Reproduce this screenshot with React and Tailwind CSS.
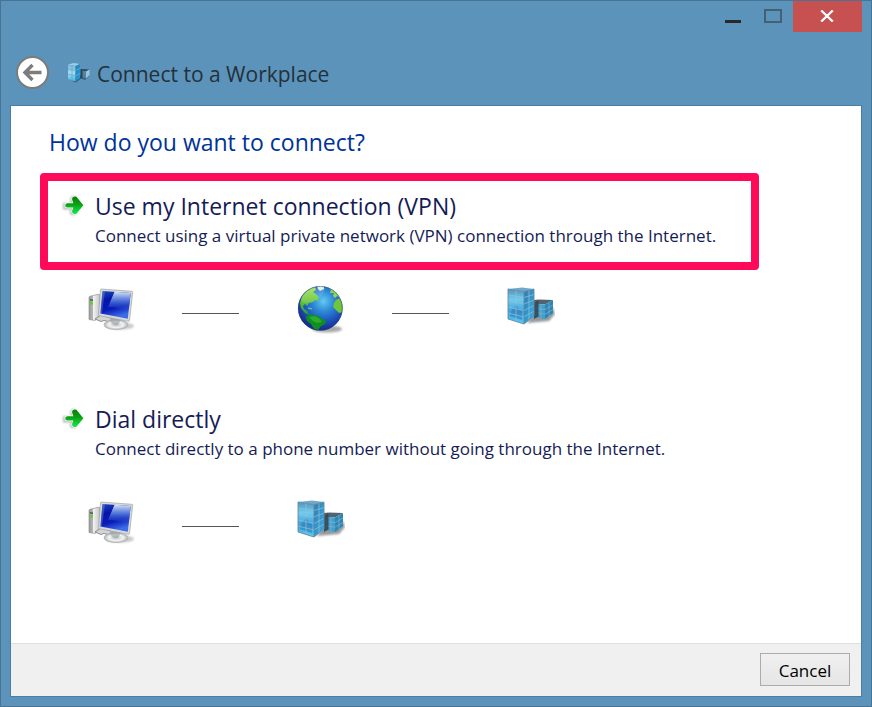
import React from 'react';

// Front, side and roof of the two glass towers
function BuildingsIcon({ className }) {
  return (
    <svg viewBox="0 0 48 48" className={className} aria-hidden="true">
      <defs>
        <linearGradient id="towerFront" x1="0" y1="0" x2="0" y2="1">
          <stop offset="0" stopColor="#4f93c2" />
          <stop offset="0.3" stopColor="#6ecbf0" />
          <stop offset="0.65" stopColor="#3ba3df" />
          <stop offset="1" stopColor="#5ccbf5" />
        </linearGradient>
        <linearGradient id="towerSide" x1="0" y1="0" x2="1" y2="1">
          <stop offset="0" stopColor="#2f7db0" />
          <stop offset="1" stopColor="#31b0ee" />
        </linearGradient>
        <filter id="towerShadow" x="-20%" y="-20%" width="140%" height="140%">
          <feGaussianBlur stdDeviation="1.2" />
        </filter>
      </defs>
      <path d="M20 37 L42 35 L48 28 L46 22 L30 22Z" fill="#3d4650" opacity="0.55" filter="url(#towerShadow)" />
      {/* low building */}
      <path d="M27 17.5 L32 13.5 L46 14 L38 18.5Z" fill="#4f6470" />
      <path d="M27 17.5 L38 18.5 V33 L27 30.5Z" fill="#3f9fce" />
      <path d="M38 18.5 L46 14 V27 L38 33Z" fill="#2b86b8" />
      <path d="M34 18 V32 M42 16.5 V30 M27 22 L38 23.6 L46 19 M27 26.3 L38 28.2 L46 23.5" stroke="#93b6c6" strokeWidth="0.6" fill="none" />
      <path d="M27 14 L31.5 13.5 V30.5 L27 33Z" fill="#36424b" opacity="0.85" />
      {/* tall building */}
      <path d="M1 3 L15 1.5 L27 3 L17 5.5Z" fill="#71a9cd" />
      <path d="M1 3 L17 5.5 V38 L1 33Z" fill="url(#towerFront)" />
      <path d="M17 5.5 L27 3 V30 L17 38Z" fill="url(#towerSide)" />
      <path d="M3 30 L5 23 L8 21 L9 18 L11 22 L15 25 V34Z" fill="#2c78b5" opacity="0.55" />
      <path d="M9 4 V35.5 M22 4.5 V34" stroke="#9cc0cf" strokeWidth="0.7" />
      <path d="M1 9 L17 11.5 L27 8.5 M1 15 L17 18 L27 14 M1 21 L17 24.5 L27 19.5 M1 27 L17 31 L27 25" stroke="#9cc0cf" strokeWidth="0.7" fill="none" />
      <path d="M1 3 V33 L17 38 L27 30 V3 M1 3 L17 5.5 L27 3 M17 5.5 V38" stroke="#6d8997" strokeWidth="0.9" fill="none" />
    </svg>
  );
}

// Simplified towers, used at caption size
function SmallBuildingsIcon({ className }) {
  return (
    <svg viewBox="0 0 24 24" className={className} aria-hidden="true">
      <defs>
        <linearGradient id="smallFront" x1="0" y1="0" x2="0" y2="1">
          <stop offset="0" stopColor="#6eb6da" />
          <stop offset="0.5" stopColor="#a6dcf0" />
          <stop offset="1" stopColor="#45b4e2" />
        </linearGradient>
        <linearGradient id="smallSide" x1="0" y1="0" x2="1" y2="1">
          <stop offset="0" stopColor="#2c7fae" />
          <stop offset="1" stopColor="#1fa0dd" />
        </linearGradient>
      </defs>
      <path d="M5 20 L9 21.5 L14 17.5 L18 19 L22 15 V13 L14 14Z" fill="#23394a" opacity="0.6" />
      <path d="M14.5 9.5 L16 8 L22.5 8.5 L19.5 10.5Z" fill="#354b5b" />
      <path d="M14.5 9.5 L19 10.5 V17.5 L14.5 16Z" fill="#4a86aa" />
      <path d="M19 10.5 L22.5 8.5 V14 L19 17.5Z" fill="#9bc6da" />
      <path d="M13.5 8 H15.5 V16.5 L13.5 18Z" fill="#2b4253" />
      <path d="M1 3.5 L7 2 L13 3 L8.5 5Z" fill="#a6cbdc" />
      <path d="M1 3.5 L8.5 5 V20.5 L1 18Z" fill="url(#smallFront)" />
      <path d="M8.5 5 L13 3 V17 L8.5 20.5Z" fill="url(#smallSide)" />
      <path d="M5 4.5 V19 M1 8 L8.5 9.5 M1 13 L8.5 15" stroke="#4d96bd" strokeWidth="0.5" />
      <path d="M8.5 9.5 L13 7.5 M8.5 15 L13 12.5" stroke="#7cc6e6" strokeWidth="0.5" />
    </svg>
  );
}

function ComputerIcon({ className }) {
  return (
    <svg viewBox="0 0 48 48" className={className} aria-hidden="true">
      <defs>
        <linearGradient id="pcCase" x1="0" y1="0" x2="1" y2="0">
          <stop offset="0" stopColor="#9b9b9b" />
          <stop offset="0.35" stopColor="#b5b5b5" />
          <stop offset="0.4" stopColor="#f2f2f2" />
          <stop offset="1" stopColor="#c4c4c4" />
        </linearGradient>
        <linearGradient id="pcScreen" x1="0" y1="0" x2="0.3" y2="1">
          <stop offset="0" stopColor="#1f49be" />
          <stop offset="0.35" stopColor="#0715a8" />
          <stop offset="0.7" stopColor="#0a1cb8" />
          <stop offset="1" stopColor="#3c6de8" />
        </linearGradient>
        <linearGradient id="pcGlare" x1="0" y1="0" x2="0" y2="1">
          <stop offset="0" stopColor="#d5e3f8" />
          <stop offset="0.5" stopColor="#4d78dc" stopOpacity="0.8" />
          <stop offset="1" stopColor="#1c3ec8" stopOpacity="0" />
        </linearGradient>
        <radialGradient id="pcBase">
          <stop offset="0" stopColor="#b9bdbf" />
          <stop offset="0.6" stopColor="#f3f4f4" />
          <stop offset="1" stopColor="#b0b3b5" />
        </radialGradient>
        <filter id="pcShadow" x="-20%" y="-50%" width="140%" height="200%">
          <feGaussianBlur stdDeviation="1.3" />
        </filter>
      </defs>
      <ellipse cx="33" cy="40" rx="14" ry="3.5" fill="#777" opacity="0.4" filter="url(#pcShadow)" />
      {/* tower */}
      <path d="M2 11.5 Q2 10.5 3 10.3 L11 8.3 Q13 8 13 10 V30 L8 34.5 L2 33.5Z" fill="url(#pcCase)" stroke="#888" strokeWidth="0.6" />
      <path d="M3 13 L6 13.4 V15 L3 14.6Z" fill="#555" />
      <rect x="3.3" y="16" width="2.6" height="2.6" fill="#46df18" />
      {/* keyboard edge */}
      <path d="M8 33 L14 29 L27 33 L21 35.5 L17 34.5 L14 35.5Z" fill="#d4d4d4" stroke="#777" strokeWidth="0.8" />
      {/* stand and screen */}
      <path d="M23 31 L34 33 L34 38 L24 38Z" fill="#bcbfc0" />
      <ellipse cx="29" cy="38.7" rx="12" ry="4.9" fill="url(#pcBase)" stroke="#aaa" strokeWidth="0.5" />
      <path d="M23 32 L33 34 Q33 39 28 39 Q23 38 23 32Z" fill="#9a9fa2" opacity="0.6" />
      <path d="M14.5 3 L45 5.3 Q45.9 5.4 45.7 6.3 L42.5 34.6 Q42.3 35.6 41.3 35.3 L12.1 29.7 Q11.3 29.5 11.5 28.6 L13.5 3.8 Q13.6 2.9 14.5 3Z" fill="#d7d9da" stroke="#999" strokeWidth="0.6" />
      <path d="M15.5 4.9 L43.7 7 L40.8 32.8 L13.4 27.6Z" fill="url(#pcScreen)" />
      <path d="M27.5 5.8 L43.7 7 L41.6 26 Q32 21 21 21Z" fill="url(#pcGlare)" />
      <path d="M15.5 4.9 L18 5.1 L14.8 27.9 L13.4 27.6Z" fill="#7da7ee" opacity="0.35" />
    </svg>
  );
}

function GlobeIcon({ className }) {
  return (
    <svg viewBox="0 0 48 48" className={className} aria-hidden="true">
      <defs>
        <radialGradient id="globeSea" cx="0.57" cy="0.34" r="0.65">
          <stop offset="0" stopColor="#63c9f4" />
          <stop offset="0.35" stopColor="#2e8bd6" />
          <stop offset="0.7" stopColor="#1c52ba" />
          <stop offset="1" stopColor="#182a85" />
        </radialGradient>
        <linearGradient id="globeLand" x1="0" y1="0" x2="0" y2="1">
          <stop offset="0" stopColor="#a2df51" />
          <stop offset="0.45" stopColor="#6cc83a" />
          <stop offset="1" stopColor="#2b9a2a" />
        </linearGradient>
        <clipPath id="globeClip">
          <circle cx="23.3" cy="22.3" r="22.3" />
        </clipPath>
        <filter id="globeShadow" x="-20%" y="-50%" width="140%" height="200%">
          <feGaussianBlur stdDeviation="1.3" />
        </filter>
      </defs>
      <ellipse cx="30" cy="43" rx="15" ry="3.5" fill="#555" opacity="0.5" filter="url(#globeShadow)" />
      <circle cx="23.3" cy="22.3" r="22.3" fill="url(#globeSea)" />
      <g clipPath="url(#globeClip)">
        <path d="M3 17 L5 10 L11 3 L18 1 L19 4 L16 6 L19 8 L22 12 L21 15 L18 14 L16 16 L12 17 L10 20 L8 18 L6 20 L7 23 L10 25 L12 29 L8 27 L4 22Z" fill="url(#globeLand)" />
        <path d="M9 31 L13 28 L17 29 L21 30 L24 32 L29 35 L28 38 L24 40 L21 44 L17 43 L14 38 L10 35Z" fill="#0f8f20" />
        <path d="M12 31 L18 30 L23 33 L25 36 L20 37 L16 35Z" fill="#42bc3a" opacity="0.6" />
        <path d="M20 0 L27 0 L27 3 L23 5 L21 3Z" fill="#e4edcf" />
        <path d="M31 1 L36 1 L42 7 L45 13 L40 10 L38 12 L36 10 L37 7 L33 7 L34 4Z" fill="#96d750" />
        <path d="M39 14 L43 12 L46 17 L46 26 L42 27 L39 24 L36 21 L37 17Z" fill="#6fc63a" />
        <path d="M11 22 L15 23" stroke="#7fd0b2" strokeWidth="1" />
        <ellipse cx="16" cy="8" rx="13" ry="7" fill="#fff" opacity="0.13" transform="rotate(-32 16 8)" />
      </g>
      <circle cx="23.3" cy="22.3" r="21.9" fill="none" stroke="#233e83" strokeWidth="0.8" opacity="0.6" />
    </svg>
  );
}

function GreenArrow() {
  return (
    <svg viewBox="0 0 20 20" className="mt-[3px] size-5 shrink-0 overflow-visible" aria-hidden="true">
      <defs>
        <linearGradient id="arrowFill" gradientUnits="userSpaceOnUse" x1="0" y1="1" x2="0" y2="19">
          <stop offset="0" stopColor="#067f06" />
          <stop offset="0.45" stopColor="#0b9f12" />
          <stop offset="1" stopColor="#10f04a" />
        </linearGradient>
        <filter id="arrowShadow" x="-30%" y="-30%" width="160%" height="160%">
          <feGaussianBlur stdDeviation="1" />
        </filter>
      </defs>
      <path d="M0 8 H8 L7 4 L9 1 H12 L20 10.5 L12 20 H8 L6.5 17 L8.5 14.5 H0Z" fill="#777" opacity="0.5" filter="url(#arrowShadow)" />
      <path
        d="M4.2 8.2 H10.4 L9.2 5 Q8.6 1.4 11.6 1.4 H13.2 L20.4 10.2 L13.2 19 H11.6 Q8.6 19 9.2 15.6 L10.4 12.6 H4.2 Q2.2 12.4 2.2 10.4 Q2.2 8.4 4.2 8.2Z"
        fill="url(#arrowFill)"
        stroke="#fff"
        strokeWidth="1.4"
        strokeLinejoin="round"
        paintOrder="stroke"
      />
    </svg>
  );
}

function ConnectOption({ title, description, highlighted, children }) {
  return (
    <section className="pb-13">
      <button
        type="button"
        className={`flex w-full max-w-[719px] items-start gap-3 rounded border-8 px-[15px] pt-[11px] pb-3.5 text-left text-[#151c55] ${
          highlighted ? 'border-[#ff0a5b]' : 'border-transparent'
        }`}
      >
        <GreenArrow />
        <span className="flex flex-col gap-1">
          <span className="text-[23px] leading-7">{title}</span>
          <span className="text-[17px] leading-6">{description}</span>
        </span>
      </button>
      <div className="mt-4 ml-[47px] grid grid-cols-[95px_115px_95px_115px_48px] items-center">
        {children}
      </div>
    </section>
  );
}

function Link() {
  return <div className="mt-1.5 w-[57px] border-t border-[#555]" />;
}

function App() {
  return (
    <div className="flex min-h-screen flex-col border border-[#477394] bg-[#5b93ba] px-[9px] pb-[9px] font-['Open_Sans','Noto_Sans',sans-serif]">
      <div className="flex h-[31px] justify-end">
        <button type="button" aria-label="Minimize" className="flex w-10 items-center justify-center">
          <svg viewBox="0 0 16 16" className="size-4" aria-hidden="true">
            <path d="M0 12.5 H16" stroke="#292929" strokeWidth="3" />
          </svg>
        </button>
        <button type="button" aria-label="Maximize" className="flex w-10 items-start justify-center pt-2" disabled>
          <svg viewBox="0 0 18 14" className="h-3.5 w-[18px]" aria-hidden="true">
            <rect x="1" y="1" width="16" height="12" fill="none" stroke="#436075" strokeWidth="2" />
          </svg>
        </button>
        <button type="button" aria-label="Close" className="flex w-[69px] items-start justify-center bg-[#c75050] pt-[9px] pr-px">
          <svg viewBox="0 0 14 12" className="h-3 w-3.5" aria-hidden="true">
            <path d="M1.2 0.5 L12.8 11.5 M12.8 0.5 L1.2 11.5" stroke="#fff" strokeWidth="2.3" />
          </svg>
        </button>
      </div>

      <header className="flex items-center pt-6 pb-4 pl-1.5">
        <button type="button" aria-label="Back" className="size-[33px] shrink-0">
          <svg viewBox="0 0 33 33" aria-hidden="true">
            <circle cx="16.5" cy="16.5" r="15.5" fill="#fff" stroke="#7c7c7c" strokeWidth="2" />
            <path d="M25.5 16.5 H9.5 M16.5 9 L9 16.5 L16.5 24" fill="none" stroke="#7c7c7c" strokeWidth="3.4" />
          </svg>
        </button>
        <SmallBuildingsIcon className="mr-1.5 ml-[18px] size-6" />
        <h1 className="pt-0.5 text-[21px] leading-7 text-[#25303a]">Connect to a Workplace</h1>
      </header>

      <div className="flex grow flex-col border border-[#4a7fa5] bg-white">
        <main className="grow pl-[29px]">
          <h2 className="pt-5 pb-[15px] pl-[9px] text-[23px] leading-8 text-[#003399]">How do you want to connect?</h2>
          <ConnectOption
            title="Use my Internet connection (VPN)"
            description="Connect using a virtual private network (VPN) connection through the Internet."
            highlighted
          >
            <ComputerIcon className="size-12" />
            <Link />
            <GlobeIcon className="size-12" />
            <Link />
            <BuildingsIcon className="size-12" />
          </ConnectOption>
          <ConnectOption
            title="Dial directly"
            description="Connect directly to a phone number without going through the Internet."
          >
            <ComputerIcon className="size-12" />
            <Link />
            <BuildingsIcon className="size-12" />
          </ConnectOption>
        </main>
        <footer className="flex justify-end border-t border-[#dfdfdf] bg-[#f0f0f0] px-[11px] pt-[9px] pb-2.5">
          <button
            type="button"
            className="h-[33px] w-[90px] border border-[#acacac] bg-linear-to-b from-[#f0f0f0] to-[#e5e5e5] pt-0.5 text-[17px] leading-6 text-black"
          >
            Cancel
          </button>
        </footer>
      </div>
    </div>
  );
}

export default App;
